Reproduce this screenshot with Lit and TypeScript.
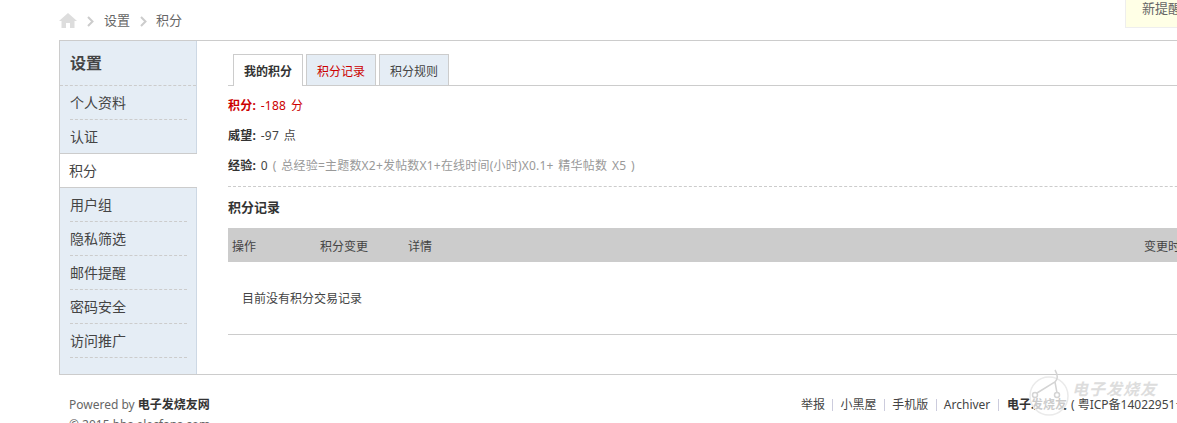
import { LitElement, html, css } from "lit";
import { customElement } from "lit/decorators.js";

@customElement("app-root")
export class AppRoot extends LitElement {
  static styles = css`
    :host { display: block; width: 1177px; height: 423px; overflow: hidden; position: relative; background: #fff;
      font: 12px/16px "Noto Sans", "Noto Sans CJK SC", sans-serif; color: #444; }
    .page { width: 1240px; margin-left: 59px; }
    .crumb { height: 40px; display: flex; align-items: center; gap: 10px; color: #666; font-size: 13px; box-sizing: border-box; }
    .crumb svg { display: block; }
    .crumb svg.chev { margin-top: 3px; }
    .crumb .cur { margin-left: -1px; }
    .box { height: 335px; box-sizing: border-box; border: 1px solid #ccc; display: flex; }
    .side { width: 137px; box-sizing: border-box; background: #e5edf5; border-right: 1px solid #cdd8e4; flex: none; height: 333px; }
    .side h2 { margin: 0; height: 45px; box-sizing: border-box; border-bottom: 1px dashed #ccc; padding: 12px 0 0 10px; font-size: 16px; line-height: 20px; font-weight: bold; color: #444; }
    .side ul { list-style: none; margin: 0; padding: 0; }
    .side li { height: 34px; margin: 0 9px 0 10px; box-sizing: border-box; border-bottom: 1px dashed #ccc; line-height: 34px; font-size: 14px; color: #444; }
    .side li.noline { border-bottom-color: transparent; }
    .side li.a { margin: 0 -1px 0 0; padding-left: 9px; background: #fff; border-top: 1px solid #ccc; border-bottom: 1px solid #ccc; line-height: 33px; height: 35px; margin-top: -1px; }
    .main { flex: 1; padding: 13px 0 0 31px; min-width: 0; }
    .tabs { display: flex; gap: 3px; height: 32px; box-sizing: border-box; border-bottom: 1px solid #ccc; padding-left: 5px; }
    .tab { width: 70px; height: 31px; box-sizing: border-box; border: 1px solid #ccc; border-bottom: none; background: #e5edf5; text-align: center; line-height: 33px; color: #444; }
    .tab.on { height: 32px; background: #fff; color: #333; font-weight: bold; }
    .tab.red { color: #c00; }
    .rows { padding-top: 12px; }
    .row { height: 30px; line-height: 16px; color: #444; letter-spacing: .2px; word-spacing: 1.500px; }
    .row b { color: #333; }
    .row.red, .row.red b { color: #c00; }
    .row .g { color: #999; }
    .exp { border-bottom: 1px dashed #ccc; height: 28px; white-space: nowrap; }
    h3 { margin: 0; font-size: 13px; line-height: 20px; font-weight: bold; color: #333; padding-top: 10px; height: 41px; box-sizing: border-box; }
    .thead { height: 34px; background: #ccc; display: grid; grid-template-columns: 88px 88px 736px 1fr; padding-left: 4px; line-height: 37px; color: #444; }
    .empty { height: 72px; border-bottom: 1px solid #ccc; padding-left: 14px; line-height: 74px; color: #444; }
    .foot { display: flex; justify-content: space-between; padding: 22px 0 0 10px; color: #666; }
    .foot b { color: #333; }
    .links { display: flex; align-items: center; color: #444; margin-right: 75px; width: 423px; white-space: pre; overflow: hidden; box-sizing: border-box; }
    .links i { width: 1px; height: 12px; background: #ccd; margin: 0 7.300px; flex: none; }
    .links b { margin-left: 1px; margin-right: 4px; }
    .copy { padding-left: 10px; color: #666; margin-top: 4px; }
    .notice { position: absolute; top: -2px; left: 1125px; width: 80px; height: 30px; box-sizing: border-box; background: #ffffe6; border: 1px solid #eee; padding: 1px 0 0 16px; color: #666; font-size: 13px; white-space: nowrap; }
    .wm { position: absolute; left: 1026px; top: 368px; display: flex; pointer-events: none; }
    .wmt { position: absolute; left: 46px; top: 13px; font-size: 16px; font-style: italic; font-weight: bold; color: #ddd; white-space: nowrap; letter-spacing: 1px; }
  `;

  render() {
    const items = ["个人资料", "认证", "积分", "用户组", "隐私筛选", "邮件提醒", "密码安全", "访问推广"];
    const chev = html`<svg class="chev" width="7" height="11" viewBox="0 0 7 11"><path d="M1 1l4.500 4.500-4.500 4.500" fill="none" stroke="#ccc" stroke-width="2"/></svg>`;
    return html`
      <div class="page">
        <div class="crumb">
          <svg width="18" height="15" viewBox="0 0 18 15"><path d="M9 0L0 8h2.500v7h4.500v-5h4v5h4.500V8H18z" fill="#ddd"/></svg>
          ${chev}<span>设置</span>${chev}<span class="cur">积分</span>
        </div>
        <div class="box">
          <div class="side">
            <h2>设置</h2>
            <ul>
              ${items.map((t, i) => html`<li class="${i === 2 ? "a" : i === 1 ? "noline" : ""}">${t}</li>`)}
            </ul>
          </div>
          <div class="main">
            <div class="tabs">
              <div class="tab on">我的积分</div>
              <div class="tab red">积分记录</div>
              <div class="tab">积分规则</div>
            </div>
            <div class="rows">
              <div class="row red"><b>积分:</b> -188 分</div>
              <div class="row"><b>威望:</b> -97 点</div>
              <div class="row exp"><b>经验:</b> 0 <span class="g">( 总经验=主题数X2+发帖数X1+在线时间(小时)X0.1+ 精华帖数 X5 )</span></div>
            </div>
            <h3>积分记录</h3>
            <div class="thead"><span>操作</span><span>积分变更</span><span>详情</span><span>变更时间</span></div>
            <div class="empty">目前没有积分交易记录</div>
          </div>
        </div>
        <div class="foot">
          <span>Powered by <b>电子发烧友网</b></span>
          <span class="links">举报<i></i>小黑屋<i></i>手机版<i></i>Archiver<i></i><b>电子发烧友</b>( 粤ICP备14022951号 )</span>
        </div>
        <div class="copy">© 2015 bbs.elecfans.com</div>
      </div>
      <div class="notice">新提醒</div>
      <div class="wm">
        <svg width="60" height="55" viewBox="0 0 60 55">
          <circle cx="23" cy="28" r="19" fill="#fff" fill-opacity=".75" stroke="#eaeaea" stroke-width="1.500"/>
          <path d="M29 2c3 5 3 9 0 12L11 25M29 14l2 11" fill="none" stroke="#d4d4d4" stroke-width="1.500"/>
          <circle cx="9" cy="27" r="2.500" fill="#fff" stroke="#d4d4d4" stroke-width="1.500"/>
          <circle cx="31" cy="27" r="2.500" fill="#fff" stroke="#d4d4d4" stroke-width="1.500"/>
        </svg>
        <span class="wmt">电子发烧友</span>
      </div>
    `;
  }
}
